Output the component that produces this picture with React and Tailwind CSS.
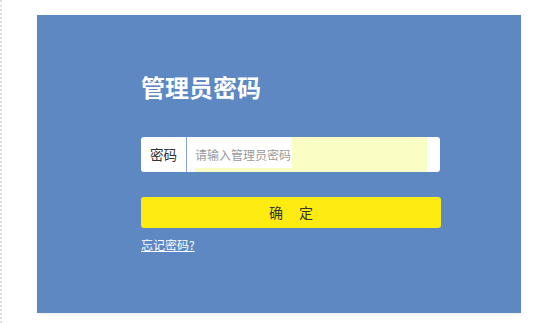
export default function App() {
  const font = { fontFamily: '"Noto Sans CJK SC", "Noto Sans", sans-serif' };
  return (
    <div className="w-[553px] h-[323px] bg-white flex overflow-hidden" style={font}>
      <div className="w-[2px] h-full border-l-2 border-dotted border-[#dcdcdc]" />
      <div className="ml-[35px] mt-[15px] w-[484px] h-[298px] bg-[#5e88c2] shadow-[0_2px_3px_rgba(0,0,0,0.06)] flex flex-col pl-[104px] pt-[58px]">
        <div className="text-[24px] leading-[28px] font-bold text-white">管理员密码</div>
        <div className="mt-[36px] w-[299px] h-[35px] bg-white rounded-[3px] flex">
          <div className="w-[46px] h-full flex items-center justify-center border-r border-[#8aa6cf] text-[13.5px] text-[#333]">
            密码
          </div>
          <div className="flex-1 h-full pl-[8px] pr-[13px]">
            <div className="h-full bg-[#fafec4] flex flex-col">
              <div className="flex-1 flex">
                <div className="w-[97px] bg-white flex items-center pt-[4px] text-[12px] text-[#9a9a9a] whitespace-nowrap">
                  请输入管理员密码
                </div>
              </div>
              <div className="h-[4px]" />
            </div>
          </div>
        </div>
        <button className="mt-[25px] w-[300px] h-[31px] bg-[#fdeb12] rounded-[3px] flex items-center justify-center text-[14px] text-[#333] gap-[16px]">
          <span>确</span>
          <span>定</span>
        </button>
        <a className="mt-[9px] text-[12px] leading-[16px] text-white underline self-start">忘记密码?</a>
      </div>
    </div>
  );
}
